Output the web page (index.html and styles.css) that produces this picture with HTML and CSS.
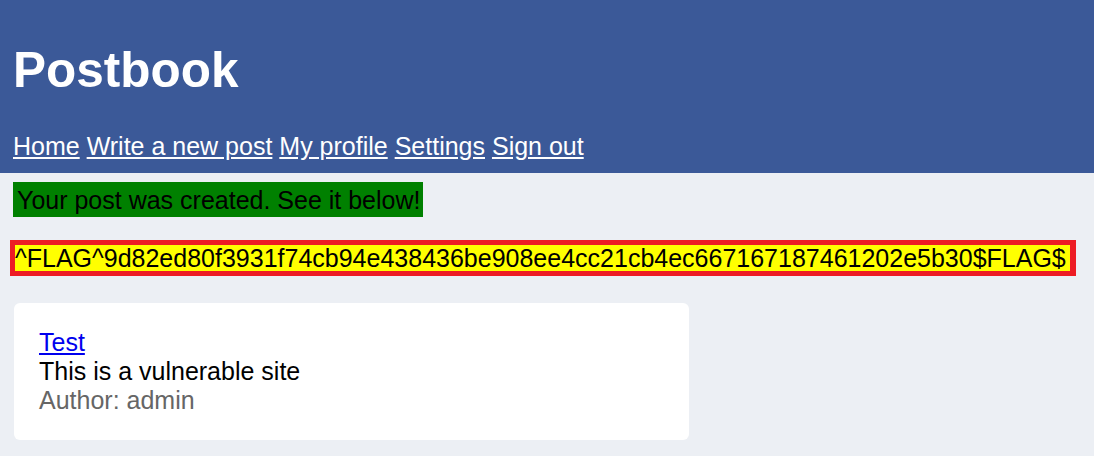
FILE: index.html
```html
<!DOCTYPE html>
<html lang="en">
<head>
<meta charset="utf-8">
<title>Postbook</title>
<link rel="stylesheet" href="styles.css">
</head>
<body>
<header class="site-header">
  <h1 class="brand">Postbook</h1>
  <nav class="nav">
    <a href="#">Home</a> <a href="#">Write a new post</a> <a href="#">My profile</a> <a href="#">Settings</a> <a href="#">Sign out</a>
  </nav>
</header>
<main class="content">
  <div class="notice">Your post was created. See it below!</div>
  <div class="flag">^FLAG^9d82ed80f3931f74cb94e438436be908ee4cc21cb4ec667167187461202e5b30$FLAG$</div>
  <article class="post">
    <a class="post-title" href="#">Test</a>
    <div class="post-body">This is a vulnerable site</div>
    <div class="post-author">Author: admin</div>
  </article>
</main>
</body>
</html>
```

FILE: styles.css
```css
html, body {
  margin: 0;
  padding: 0;
}

body {
  background: #eceff4;
  font-family: "Liberation Sans", Arial, sans-serif;
  font-size: 25px;
  color: #000;
}

.site-header {
  background: #3b5998;
  color: #fff;
  padding: 8px 12px 12px;
}

.brand {
  font-size: 49.5px;
  font-weight: bold;
  margin: 33px 0;
  padding-left: 1px;
}

.nav {
  padding-left: 1px;
  padding-top: 1px;
}

.nav a {
  color: #fff;
  text-decoration: underline;
}

.content {
  padding: 9px 10px 20px;
}

.notice {
  width: fit-content;
  margin-left: 3px;
  background: #008000;
  color: #000;
  padding: 4px 3px 2px 4px;
}

.flag {
  width: fit-content;
  margin-top: 22.6px;
  background: #ffff00;
  border: 5px solid #ed1c24;
  border-right-width: 6px;
  line-height: 26px;
  padding-right: 4px;
  white-space: nowrap;
}

.post {
  width: 625px;
  margin: 27.4px 0 0 4px;
  background: #fff;
  border-radius: 6px;
  padding: 25px;
}

.post-title {
  color: #0000ee;
  text-decoration: underline;
}

.post-author {
  color: #666;
}
```
